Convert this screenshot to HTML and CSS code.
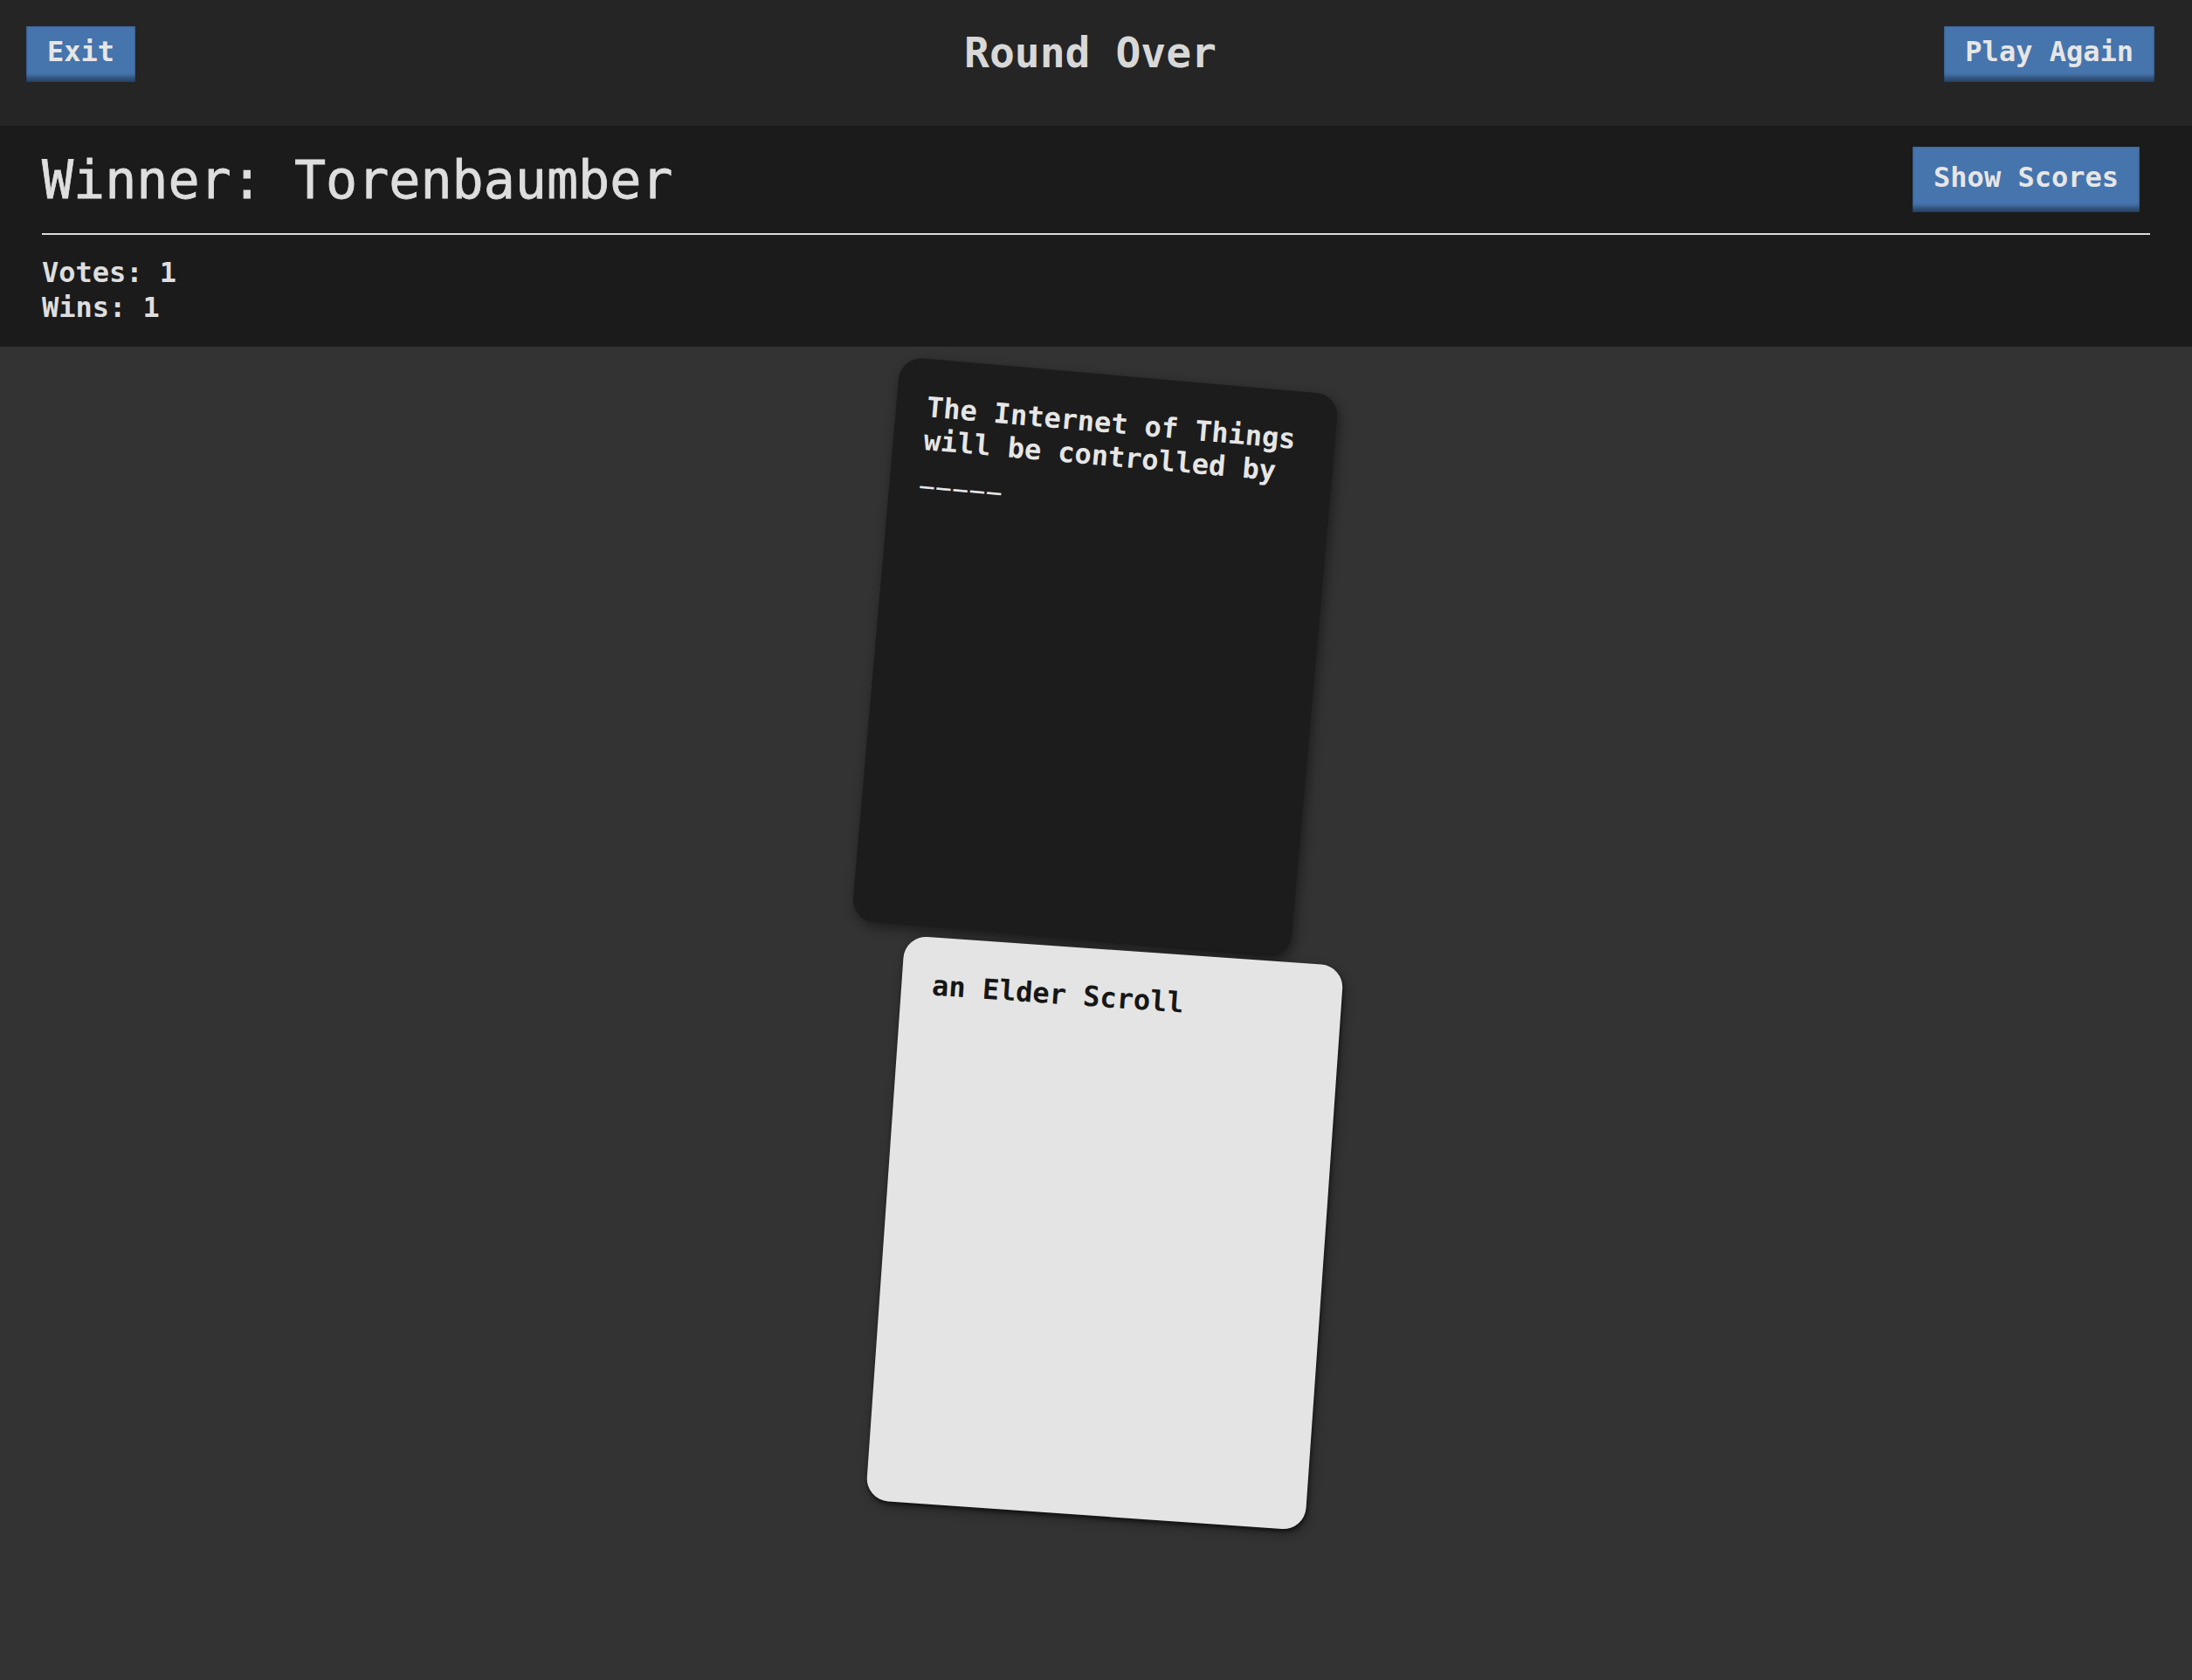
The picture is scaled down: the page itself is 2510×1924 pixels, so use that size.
FILE: index.html
```html
<!DOCTYPE html>
<html lang="en">
<head>
<meta charset="utf-8">
<title>Round Over</title>
<link rel="stylesheet" href="styles.css">
</head>
<body>
<header class="topbar">
  <div class="topbar-left"><button class="btn">Exit</button></div>
  <h1 class="title">Round Over</h1>
  <div class="topbar-right"><button class="btn">Play Again</button></div>
</header>
<section class="winner-panel">
  <div class="winner-row">
    <h2 class="winner-name">Winner: Torenbaumber</h2>
    <button class="btn btn-scores">Show Scores</button>
  </div>
  <hr class="divider">
  <div class="stats">
    <div>Votes: 1</div>
    <div>Wins: 1</div>
  </div>
</section>
<main class="table">
  <div class="card card-black">The Internet of Things will be controlled by <span class="blank">_____</span></div>
  <div class="card card-white">an Elder Scroll</div>
</main>
</body>
</html>
```
FILE: styles.css
```css
* { box-sizing: border-box; }
html, body { margin: 0; padding: 0; }
body {
  background: #333333;
  color: #dedede;
  font-family: "DejaVu Sans Mono", "Liberation Mono", monospace;
  font-weight: bold;
  min-height: 1924px;
}
.topbar {
  height: 144px;
  background: #252525;
  display: grid;
  grid-template-columns: 1fr auto 1fr;
  align-items: start;
  padding: 30px 43px 0 30px;
}
.topbar-right { display: flex; justify-content: flex-end; }
.title {
  margin: 2px 0 0;
  font-size: 48px;
  line-height: 56px;
  font-weight: bold;
  color: #d8d8d8;
}
.btn {
  font-family: inherit;
  font-weight: bold;
  font-size: 32px;
  line-height: 40px;
  color: #e6e6e6;
  background: #4674ad;
  border: none;
  border-radius: 0;
  padding: 9px 24px 15px;
  box-shadow: inset 0 -9px 5px -3px rgba(0,0,0,0.38), inset 0 0 2px rgba(0,0,0,0.45);
  cursor: pointer;
}
.winner-panel {
  background: #1b1b1b;
  padding: 24px 48px 25px;
}
.winner-row {
  display: flex;
  justify-content: space-between;
  align-items: center;
}
.winner-name {
  margin: 0;
  font-size: 60px;
  line-height: 70px;
  font-weight: normal;
  color: #dedede;
  -webkit-text-stroke: 0.8px #dedede;
}
.btn-scores {
  padding: 15px 24px 20px;
  margin-right: 12px;
}
.divider {
  margin: 24px 0 0;
  border: none;
  height: 2px;
  background: #dcdcdc;
}
.stats {
  margin-top: 23px;
  font-size: 32px;
  line-height: 40px;
  color: #dedede;
}
.table {
  display: flex;
  flex-direction: column;
  align-items: center;
  gap: 11px;
  padding-top: 32px;
}
.card {
  width: 504px;
  height: 648px;
  border-radius: 26px;
  padding: 36px 35px;
  font-size: 32px;
  line-height: 38px;
}
.blank {
  font-size: 27px;
  letter-spacing: 3px;
}
.card-black {
  background: #1c1c1c;
  color: #e6e6e6;
  transform: translateX(-1px) rotate(5deg);
  box-shadow: 3px 5px 14px rgba(0,0,0,0.45);
}
.card-white {
  background: #e4e4e4;
  color: #161616;
  transform: translateX(10px) rotate(4deg);
  box-shadow: 1px 3px 4px rgba(0,0,0,0.55), 3px 5px 14px rgba(0,0,0,0.3);
}
```
